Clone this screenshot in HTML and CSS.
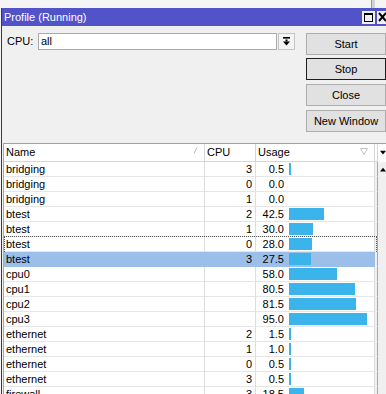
FILE: index.html
```html
<!DOCTYPE html>
<html>
<head>
<meta charset="utf-8">
<link rel="stylesheet" href="styles.css">
</head>
<body>
<div class="screen">
  <div class="backdrop"><span class="bgline"></span></div>
  <div class="window">
    <div class="titlebar">
      <span class="title">Profile (Running)</span>
      <span class="maxbtn"><span class="maxsq"></span></span>
      <span class="closebtn"><svg width="12" height="12" viewBox="0 0 12 12"><path d="M2 2 L9 10 M9 2 L2 10" stroke="#000" stroke-width="2" fill="none"/></svg></span>
    </div>
    <div class="controls">
      <div class="cpu-row">
        <span class="cpu-label">CPU:</span>
        <div class="input">all</div>
        <div class="dd"><svg width="7" height="9" viewBox="0 0 7 9"><rect x="0" y="0" width="7" height="1.6" fill="#000"/><rect x="2.5" y="2.5" width="2" height="2" fill="#000"/><path d="M0 4.5 H7 L3.5 8.5 Z" fill="#000"/></svg></div>
      </div>
      <div class="buttons">
        <div class="btn">Start</div>
        <div class="btn btn-default">Stop</div>
        <div class="btn">Close</div>
        <div class="btn">New Window</div>
      </div>
    </div>
    <div class="table">
      <div class="row head">
        <div class="c name">Name<svg class="sorticon" width="5" height="7" viewBox="0 0 5 7"><path d="M1 6.5 L4 0.5" stroke="#b8b8b8" stroke-width="1" fill="none"/></svg></div>
        <div class="c cpu-h">CPU</div>
        <div class="c usage-h">Usage<svg class="filtericon" width="8" height="7" viewBox="0 0 8 7"><path d="M0.5 0.5 H7.5 L4 6.5 Z" stroke="#c0c0c0" stroke-width="1" fill="none"/></svg></div>
        <div class="c gap"></div>
        <div class="c scroll"><svg width="8" height="6" viewBox="0 0 8 6"><path d="M0 0 H8 L4 5 Z" fill="#000"/></svg></div>
      </div>

      <div class="row"><div class="c name">bridging</div><div class="c cpu">3</div><div class="c usage"><span class="val">0.5</span><span class="bar" style="width:2px"></span></div><div class="c gap"></div><div class="c scroll"><svg width="8" height="6" viewBox="0 0 8 6"><path d="M0 5 H8 L4 0 Z" fill="#000"/></svg></div></div>
      <div class="row"><div class="c name">bridging</div><div class="c cpu">0</div><div class="c usage"><span class="val">0.0</span></div><div class="c gap"></div><div class="c scroll"></div></div>
      <div class="row"><div class="c name">bridging</div><div class="c cpu">1</div><div class="c usage"><span class="val">0.0</span></div><div class="c gap"></div><div class="c scroll"></div></div>
      <div class="row"><div class="c name">btest</div><div class="c cpu">2</div><div class="c usage"><span class="val">42.5</span><span class="bar" style="width:35px"></span></div><div class="c gap"></div><div class="c scroll"></div></div>
      <div class="row"><div class="c name">btest</div><div class="c cpu">1</div><div class="c usage"><span class="val">30.0</span><span class="bar" style="width:24px"></span></div><div class="c gap"></div><div class="c scroll"></div></div>
      <div class="row focus"><div class="c name">btest</div><div class="c cpu">0</div><div class="c usage"><span class="val">28.0</span><span class="bar" style="width:23px"></span></div><div class="c gap"></div><div class="c scroll"></div></div>
      <div class="row selected"><div class="c name">btest</div><div class="c cpu">3</div><div class="c usage"><span class="val">27.5</span><span class="bar" style="width:22px"></span></div><div class="c gap"></div><div class="c scroll"></div></div>
      <div class="row"><div class="c name">cpu0</div><div class="c cpu"></div><div class="c usage"><span class="val">58.0</span><span class="bar" style="width:48px"></span></div><div class="c gap"></div><div class="c scroll"></div></div>
      <div class="row"><div class="c name">cpu1</div><div class="c cpu"></div><div class="c usage"><span class="val">80.5</span><span class="bar" style="width:66px"></span></div><div class="c gap"></div><div class="c scroll"></div></div>
      <div class="row"><div class="c name">cpu2</div><div class="c cpu"></div><div class="c usage"><span class="val">81.5</span><span class="bar" style="width:67px"></span></div><div class="c gap"></div><div class="c scroll"></div></div>
      <div class="row"><div class="c name">cpu3</div><div class="c cpu"></div><div class="c usage"><span class="val">95.0</span><span class="bar" style="width:78px"></span></div><div class="c gap"></div><div class="c scroll"></div></div>
      <div class="row"><div class="c name">ethernet</div><div class="c cpu">2</div><div class="c usage"><span class="val">1.5</span><span class="bar" style="width:2px"></span></div><div class="c gap"></div><div class="c scroll"></div></div>
      <div class="row"><div class="c name">ethernet</div><div class="c cpu">1</div><div class="c usage"><span class="val">1.0</span><span class="bar" style="width:2px"></span></div><div class="c gap"></div><div class="c scroll"></div></div>
      <div class="row"><div class="c name">ethernet</div><div class="c cpu">0</div><div class="c usage"><span class="val">0.5</span><span class="bar" style="width:2px"></span></div><div class="c gap"></div><div class="c scroll"></div></div>
      <div class="row"><div class="c name">ethernet</div><div class="c cpu">3</div><div class="c usage"><span class="val">0.5</span><span class="bar" style="width:2px"></span></div><div class="c gap"></div><div class="c scroll"></div></div>
      <div class="row"><div class="c name">firewall</div><div class="c cpu">3</div><div class="c usage"><span class="val">18.5</span><span class="bar" style="width:15px"></span></div><div class="c gap"></div><div class="c scroll"></div></div>
    </div>
  </div>
</div>
</body>
</html>
```

FILE: styles.css
```css
* { box-sizing: border-box; }
html, body { margin: 0; padding: 0; }
body {
  font-family: "Liberation Sans", Arial, sans-serif;
  font-size: 11px;
  color: #000;
  background: #f5f5f5;
}
.screen {
  width: 386px;
  height: 394px;
  overflow: hidden;
  background: #f5f5f5;
}
.backdrop {
  height: 8px;
  display: flex;
}
.bgline {
  margin-left: 371px;
  width: 4px;
  height: 8px;
  background: #d4d4d4;
  border-left: 1px solid #9a9a9a;
}
.window {
  margin-left: 1px;
  width: 385px;
  height: 386px;
  border-left: 1px solid #3a3a3a;
  background: #f0f0f0;
  overflow: hidden;
}
.titlebar {
  height: 18px;
  background: #5252c9;
  display: flex;
  align-items: center;
  padding-left: 2px;
}
.title {
  flex: 1;
  color: #fff;
  font-size: 11px;
  line-height: 18px;
}
.maxbtn {
  width: 13px;
  height: 13px;
  background: #f0f0f0;
  display: flex;
  align-items: center;
  justify-content: center;
}
.maxsq {
  width: 9px;
  height: 9px;
  border: 1px solid #000;
  border-top-width: 2px;
}
.closebtn {
  width: 12px;
  height: 13px;
  margin-left: 2px;
  margin-right: -3px;
  background: #f0f0f0;
  display: flex;
  align-items: center;
  justify-content: center;
}
.controls {
  height: 117px;
  display: grid;
  grid-template-columns: 304px 80px;
  padding-top: 7px;
}
.cpu-row {
  display: flex;
  align-items: center;
  height: 17px;
  padding-left: 5px;
}
.cpu-label {
  width: 31px;
  line-height: 17px;
}
.input {
  width: 239px;
  height: 17px;
  background: #fff;
  border: 1px solid #a9a9a9;
  padding-left: 2px;
  line-height: 15px;
}
.dd {
  width: 17px;
  height: 17px;
  margin-left: 1px;
  border: 1px solid #c4c4c4;
  background: #f4f4f4;
  display: flex;
  align-items: center;
  justify-content: center;
}
.buttons {
  display: flex;
  flex-direction: column;
}
.btn {
  height: 22px;
  margin-top: 4px;
  background: #e1e1e1;
  border: 1px solid #adadad;
  text-align: center;
  line-height: 20px;
}
.btn:first-child { margin-top: 0; }
.btn-default {
  margin-top: 3px;
  border-color: #1e1e1e;
}
.table {
  margin-left: 1px;
  border-left: 1px solid #a8a8a8;
  border-top: 1px solid #a0a0a0;
  background: #fff;
}
.row {
  display: grid;
  grid-template-columns: 201px 51px 119px 3px 1fr;
  height: 15px;
  position: relative;
}
.row.head {
  height: 18px;
}
.c {
  border-right: 1px solid #dedede;
  border-bottom: 1px solid #e6e6e6;
  line-height: 14px;
  white-space: nowrap;
  overflow: hidden;
}
.head .c {
  line-height: 17px;
  border-bottom-color: #d5d5d5;
  border-right-color: #d5d5d5;
  background: #fff;
}
.name { padding-left: 2px; }
.head .name, .usage-h {
  display: flex;
  align-items: center;
  padding-left: 2px;
}
.cpu-h { padding-left: 2px; }
.sorticon { margin-left: auto; margin-right: 6px; margin-top: -5px; }
.filtericon { margin-left: auto; margin-right: 6px; margin-top: -3px; }
.cpu {
  text-align: right;
  padding-right: 3px;
}
.usage {
  display: flex;
  align-items: flex-start;
}
.val {
  width: 28px;
  text-align: right;
  line-height: 14px;
  flex: none;
}
.bar {
  height: 12px;
  margin-top: 1px;
  margin-left: 5px;
  background: #3ab4ea;
  flex: none;
}
.gap {
  background: #f0f0f0;
  border-bottom-color: #f0f0f0;
  border-right-color: #a8a8a8;
}
.scroll {
  background: #f0f0f0;
  border: none;
  padding-left: 2px;
  display: flex;
  align-items: center;
}
.selected .name, .selected .cpu, .selected .usage {
  background: #9cbfe9;
  border-color: #9cbfe9;
}
.focus::after {
  content: "";
  position: absolute;
  left: 0;
  top: -1px;
  width: 371px;
  height: 16px;
  border: 1px dotted #555;
  pointer-events: none;
}
```
